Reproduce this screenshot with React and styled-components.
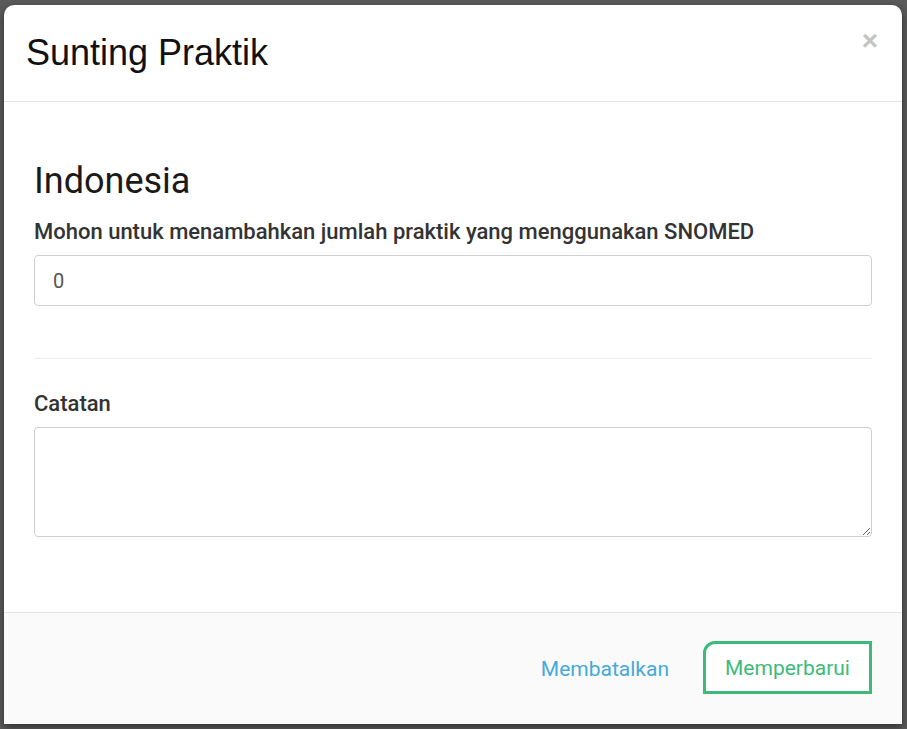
import React from "react";
import styled, { createGlobalStyle } from "styled-components";

const GlobalStyle = createGlobalStyle`
  html, body {
    margin: 0;
    padding: 0;
    background: #5b5b5b;
  }
  * {
    box-sizing: border-box;
  }
`;

const Backdrop = styled.div`
  width: 907px;
  height: 729px;
  padding: 5px 5px 5px 4px;
  background: #5b5b5b;
  overflow: hidden;
`;

const Modal = styled.div`
  width: 898px;
  height: 719px;
  background: #fff;
  border-radius: 10px 10px 0 0;
  box-shadow: 0 3px 9px rgba(0, 0, 0, 0.5);
  display: flex;
  flex-direction: column;
`;

const Header = styled.div`
  height: 97px;
  flex-shrink: 0;
  padding: 0 24px 0 22px;
  border-bottom: 1px solid #e5e5e5;
  display: flex;
  align-items: center;
  justify-content: space-between;
`;

const Title = styled.h4`
  margin: 0;
  font-family: "Liberation Sans", Arial, sans-serif;
  font-weight: 400;
  font-size: 36px;
  line-height: 36px;
  color: #111;
`;

const Close = styled.button`
  align-self: flex-start;
  margin-top: 22px;
  padding: 0;
  border: none;
  background: none;
  font-family: "Liberation Sans", Arial, sans-serif;
  font-weight: 700;
  font-size: 28px;
  line-height: 28px;
  color: #c4c4c4;
  cursor: pointer;
`;

const Body = styled.div`
  flex: 1;
  padding: 59px 30px 0 30px;
  font-family: Roboto, "Noto Sans", sans-serif;
`;

const Heading = styled.h3`
  margin: 0;
  font-family: Roboto, sans-serif;
  font-weight: 400;
  font-size: 36px;
  line-height: 40px;
  color: #1a1a1a;
`;

const Field = styled.div`
  display: flex;
  flex-direction: column;
  margin-top: ${(p) => p.$top}px;
`;

const Label = styled.label`
  font-family: Roboto, sans-serif;
  font-weight: 500;
  font-size: 22px;
  line-height: 26px;
  color: #333;
  margin-bottom: 10px;
`;

const Input = styled.input`
  width: 100%;
  height: 51px;
  padding: 0 18px;
  border: 1px solid #cfcfcf;
  border-radius: 4px;
  font-family: Roboto, sans-serif;
  font-size: 20px;
  color: #555;
  background: #fff;
  outline: none;
`;

const Divider = styled.hr`
  margin: 52px 0 0 0;
  border: none;
  border-top: 1px solid #eee;
`;

const TextArea = styled.textarea`
  width: 100%;
  height: 110px;
  padding: 10px 18px;
  border: 1px solid #cfcfcf;
  border-radius: 4px;
  font-family: Roboto, sans-serif;
  font-size: 20px;
  color: #555;
  background: #fff;
  outline: none;
  resize: vertical;
  display: block;
`;

const Footer = styled.div`
  height: 112px;
  flex-shrink: 0;
  border-top: 1px solid #e5e5e5;
  background: #fafafa;
  padding: 0 30px;
  display: flex;
  align-items: center;
  justify-content: flex-end;
  gap: 34px;
`;

const LinkButton = styled.button`
  padding: 0;
  border: none;
  background: none;
  font-family: Roboto, sans-serif;
  font-size: 21px;
  font-weight: 400;
  color: #45aad9;
  cursor: pointer;
`;

const OutlineButton = styled.button`
  width: 169px;
  height: 53px;
  margin-top: -2px;
  border: 3px solid #3dba7a;
  border-radius: 12px 0 0 0;
  background: #fff;
  font-family: Roboto, sans-serif;
  font-size: 21px;
  font-weight: 400;
  color: #3dba7a;
  cursor: pointer;
`;

export default function App() {
  return (
    <>
      <GlobalStyle />
      <Backdrop>
        <Modal>
          <Header>
            <Title>Sunting Praktik</Title>
            <Close aria-label="Close">×</Close>
          </Header>
          <Body>
            <Heading>Indonesia</Heading>
            <Field $top={18}>
              <Label>Mohon untuk menambahkan jumlah praktik yang menggunakan SNOMED</Label>
              <Input defaultValue="0" />
            </Field>
            <Divider />
            <Field $top={32}>
              <Label>Catatan</Label>
              <TextArea />
            </Field>
          </Body>
          <Footer>
            <LinkButton>Membatalkan</LinkButton>
            <OutlineButton>Memperbarui</OutlineButton>
          </Footer>
        </Modal>
      </Backdrop>
    </>
  );
}
